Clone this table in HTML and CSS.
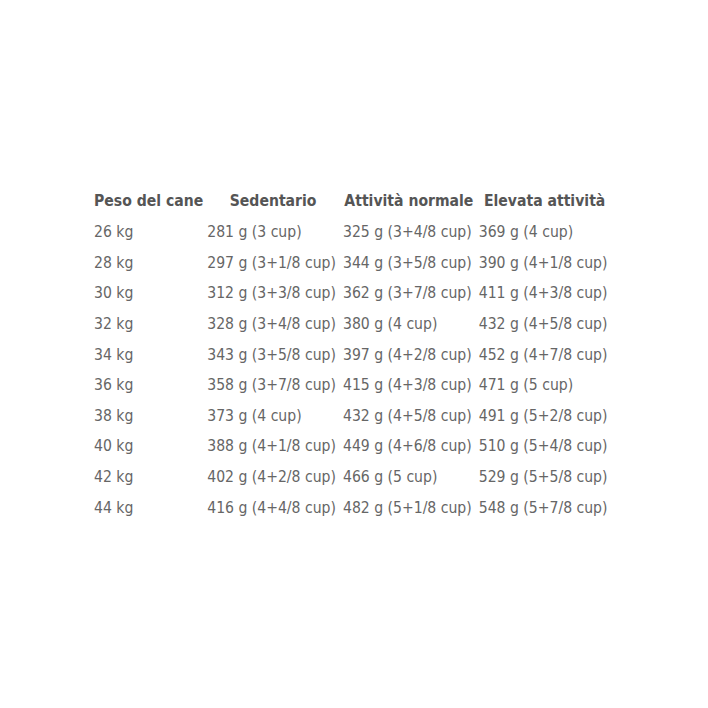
FILE: index.html
```html
<!DOCTYPE html>
<html lang="it">
<head>
<meta charset="utf-8">
<link rel="stylesheet" href="styles.css">
</head>
<body>
<main class="page">
<table class="feed">
<thead>
<tr><th>Peso del cane</th><th>Sedentario</th><th>Attività normale</th><th>Elevata attività</th></tr>
</thead>
<tbody>
<tr><td>26 kg</td><td>281 g (3 cup)</td><td>325 g (3+4/8 cup)</td><td>369 g (4 cup)</td></tr>
<tr><td>28 kg</td><td>297 g (3+1/8 cup)</td><td>344 g (3+5/8 cup)</td><td>390 g (4+1/8 cup)</td></tr>
<tr><td>30 kg</td><td>312 g (3+3/8 cup)</td><td>362 g (3+7/8 cup)</td><td>411 g (4+3/8 cup)</td></tr>
<tr><td>32 kg</td><td>328 g (3+4/8 cup)</td><td>380 g (4 cup)</td><td>432 g (4+5/8 cup)</td></tr>
<tr><td>34 kg</td><td>343 g (3+5/8 cup)</td><td>397 g (4+2/8 cup)</td><td>452 g (4+7/8 cup)</td></tr>
<tr><td>36 kg</td><td>358 g (3+7/8 cup)</td><td>415 g (4+3/8 cup)</td><td>471 g (5 cup)</td></tr>
<tr><td>38 kg</td><td>373 g (4 cup)</td><td>432 g (4+5/8 cup)</td><td>491 g (5+2/8 cup)</td></tr>
<tr><td>40 kg</td><td>388 g (4+1/8 cup)</td><td>449 g (4+6/8 cup)</td><td>510 g (5+4/8 cup)</td></tr>
<tr><td>42 kg</td><td>402 g (4+2/8 cup)</td><td>466 g (5 cup)</td><td>529 g (5+5/8 cup)</td></tr>
<tr><td>44 kg</td><td>416 g (4+4/8 cup)</td><td>482 g (5+1/8 cup)</td><td>548 g (5+7/8 cup)</td></tr>
</tbody>
</table>
</main>
</body>
</html>
```
FILE: styles.css
```css
html, body {
  margin: 0;
  padding: 0;
  background: #ffffff;
}
.page {
  width: 708px;
  height: 708px;
  padding: 185px 0 0 92px;
  box-sizing: border-box;
}
.feed {
  border-collapse: collapse;
  font-family: "DejaVu Sans Condensed", "DejaVu Sans", sans-serif;
  color: #666666;
}
.feed th {
  font-weight: bold;
  font-size: 15.6px;
  color: #555555;
  text-align: center;
  padding: 0 2px 1px;
  height: 31px;
  white-space: nowrap;
}
.feed td {
  font-size: 15.6px;
  text-align: left;
  padding: 0 5px 0 2px;
  height: 30.6px;
  white-space: nowrap;
}
```
